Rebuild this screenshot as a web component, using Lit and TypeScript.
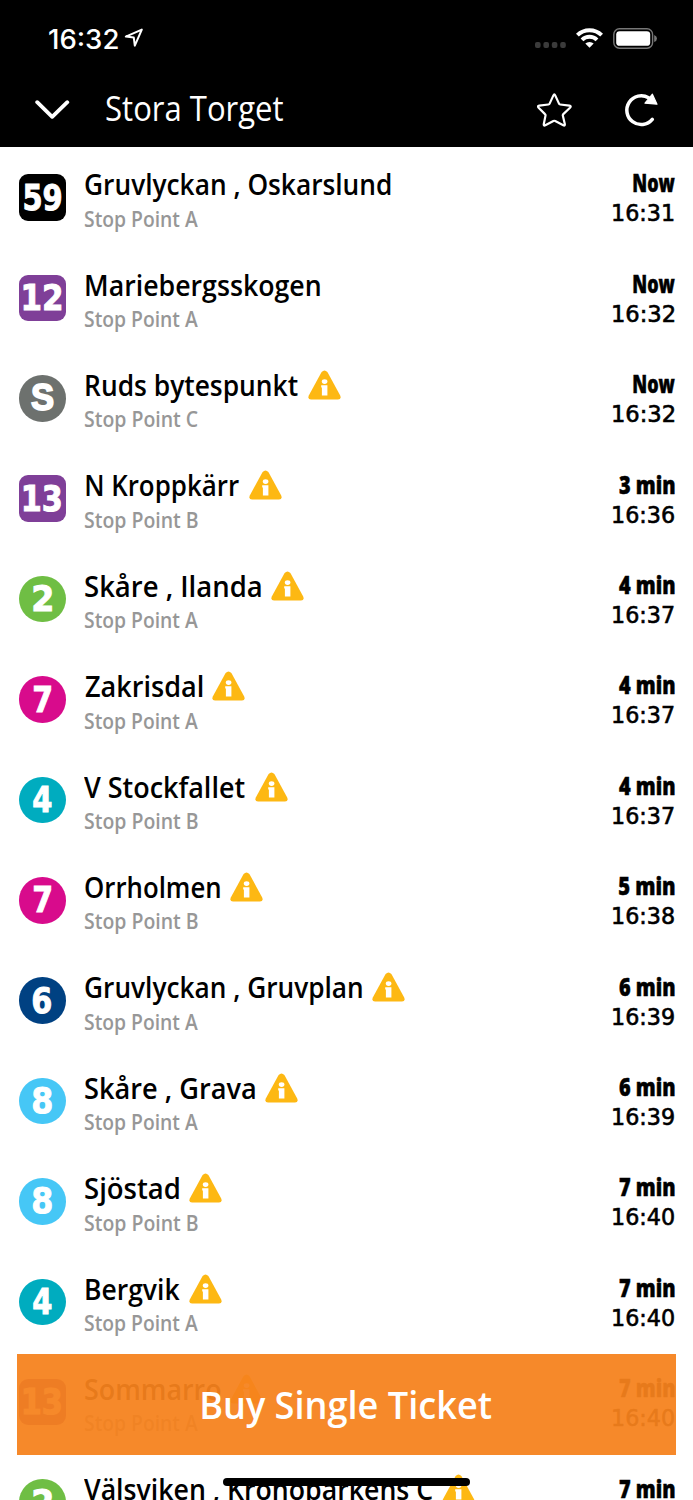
import { LitElement, html, css, svg } from "lit";
import { customElement, property } from "lit/decorators.js";

const measure = document.createElement("canvas").getContext("2d")!;

/** One line of text condensed or widened to an exact visible width. */
@customElement("fit-text")
class FitText extends LitElement {
  @property() text = "";
  @property({ type: Number }) w = 100;

  static styles = css`
    :host { display: block; white-space: pre; flex: none; }
    .line { display: inline-block; transform-origin: 0 50%; }
  `;

  render() {
    const cs = getComputedStyle(this);
    measure.font = `${cs.fontWeight} ${cs.fontSize} ${cs.fontFamily}`;
    const m = measure.measureText(this.text);
    const scale = this.w / (m.actualBoundingBoxLeft + m.actualBoundingBoxRight);
    const shift = m.actualBoundingBoxLeft * scale;
    this.style.width = `${this.w}px`;
    return html`<span class="line" style="transform: translateX(${shift}px) scaleX(${scale})">${this.text}</span>`;
  }
}

type Row = {
  line: string; color: string; square?: boolean;
  name: string; left: number; right: number;
  stop: string; alert?: boolean; due: string; time: string;
};

const rows: Row[] = [
  { line: "59", color: "#000000", square: true, name: "Gruvlyckan , Oskarslund", left: 85, right: 391, stop: "A", due: "Now", time: "16:31" },
  { line: "12", color: "#7f3f98", square: true, name: "Mariebergsskogen", left: 86, right: 320, stop: "A", due: "Now", time: "16:32" },
  { line: "S", color: "#6d716e", name: "Ruds bytespunkt", left: 86, right: 298, stop: "C", alert: true, due: "Now", time: "16:32" },
  { line: "13", color: "#7f3f98", square: true, name: "N Kroppkärr", left: 86, right: 239, stop: "B", alert: true, due: "3 min", time: "16:36" },
  { line: "2", color: "#6fbe44", name: "Skåre , Ilanda", left: 84.5, right: 261, stop: "A", alert: true, due: "4 min", time: "16:37" },
  { line: "7", color: "#d80b8c", name: "Zakrisdal", left: 84.5, right: 202, stop: "A", alert: true, due: "4 min", time: "16:37" },
  { line: "4", color: "#00acbf", name: "V Stockfallet", left: 84, right: 245, stop: "B", alert: true, due: "4 min", time: "16:37" },
  { line: "7", color: "#d80b8c", name: "Orrholmen", left: 85, right: 220, stop: "B", alert: true, due: "5 min", time: "16:38" },
  { line: "6", color: "#004182", name: "Gruvlyckan , Gruvplan", left: 85, right: 362, stop: "A", alert: true, due: "6 min", time: "16:39" },
  { line: "8", color: "#46c7f6", name: "Skåre , Grava", left: 84.5, right: 255, stop: "A", alert: true, due: "6 min", time: "16:39" },
  { line: "8", color: "#46c7f6", name: "Sjöstad", left: 84.5, right: 179, stop: "B", alert: true, due: "7 min", time: "16:40" },
  { line: "4", color: "#00acbf", name: "Bergvik", left: 86, right: 179.5, stop: "A", alert: true, due: "7 min", time: "16:40" },
  { line: "13", color: "#7f3f98", square: true, name: "Sommarro", left: 84.5, right: 220, stop: "A", alert: true, due: "7 min", time: "16:40" },
  { line: "2", color: "#6fbe44", name: "Välsviken , Kronoparkens C", left: 84, right: 432.5, stop: "B", alert: true, due: "7 min", time: "16:41" },
];

const badgeWidth = (line: string) =>
  line.length === 2 ? 37 : line === "S" ? 21.5 : line === "7" ? 17.5 : 18.5;

const alertIcon = html`<svg class="alert" width="33" height="30" viewBox="0 0 33 30">
  ${svg`<path d="M13.6 1.9Q16.5-1.1 19.4 1.9L32.2 25.6Q33.6 29.5 30 29.5H3Q-.6 29.5 .8 25.6Z" fill="#fdb813"/>
  <ellipse cx="16.6" cy="11.6" rx="2.8" ry="2.3" fill="#fff"/>
  <path d="M13.2 15.3H19.4V25.4H13.9V17.4H13.2Z" fill="#fff"/>`}
</svg>`;

@customElement("app-root")
class AppRoot extends LitElement {
  static styles = css`
    :host {
      display: block; position: relative; width: 693px; height: 1500px; overflow: hidden;
      background: #fff; color: #000; font-family: "Open Sans", "Noto Sans", sans-serif;
    }
    header { height: 147.3px; background: #000; color: #fff; box-sizing: border-box; }
    .status { display: flex; align-items: center; height: 76px; padding: 0 36px 0 49px; box-sizing: border-box; }
    .clock { font: 500 26.5px/32px Inter, sans-serif; margin-right: 6px; margin-top: 1px; }
    .dots { margin-left: auto; margin-top: 13px; }
    .wifi { margin-left: 9px; }
    .battery { margin-left: 10px; }
    .nav { display: flex; align-items: center; height: 68px; padding: 0 35px 0 35px; }
    .title { font-size: 34px; line-height: 44px; font-weight: 400; margin-left: 36px; margin-top: -5px; }
    .down { margin-top: -1px; }
    .star { margin-left: auto; margin-right: 52px; }
    .row { display: flex; height: 100.4px; padding: 0 18px 0 19px; box-sizing: border-box; }
    .badge {
      width: 46.5px; height: 46.5px; margin-top: 27px; flex: none; border-radius: 50%; color: #fff;
      display: flex; align-items: center; justify-content: center;
      font: 700 36px/46px "DejaVu Sans", sans-serif; -webkit-text-stroke: 1px #fff;
    }
    .badge.square { border-radius: 9px; }
    .badge.letter { font-family: "Liberation Sans", sans-serif; font-size: 37px; -webkit-text-stroke: 1.8px #fff; }
    .info { flex: 1; margin-top: 20px; }
    .head { display: flex; height: 34px; }
    .name { font-size: 28px; line-height: 34px; font-weight: 600; }
    .alert { margin: 2px 0 0 9.5px; flex: none; }
    .stop { font-size: 20.8px; line-height: 26px; font-weight: 600; color: #979797; margin: 4.3px 0 0 19px; }
    .when { display: flex; flex-direction: column; align-items: flex-end; gap: 3px; margin-top: 21.2px; }
    .due { font-size: 25px; line-height: 28px; font-weight: 800; -webkit-text-stroke: 0.5px currentColor; }
    .time { font: 400 22.2px/28px "DejaVu Sans", sans-serif; -webkit-text-stroke: 0.6px #000; margin-right: 0.7px; }
    .buy {
      position: absolute; left: 17px; top: 1354px; width: 659px; height: 100.5px;
      display: flex; align-items: center; justify-content: center;
      background: rgba(245, 130, 29, 0.94); color: #fff;
      font-size: 38px; line-height: 50px; font-weight: 600;
    }
    .home { position: absolute; left: 223px; top: 1478px; width: 247px; height: 8px; border-radius: 4px; background: #000; }
  `;

  renderRow(r: Row) {
    return html`<div class="row">
      <div class="badge ${r.square ? "square" : ""} ${r.line === "S" ? "letter" : ""}" style="background:${r.color}">
        <fit-text text=${r.line} w=${badgeWidth(r.line)}></fit-text>
      </div>
      <div class="info">
        <div class="head">
          <fit-text class="name" style="margin-left:${r.left - 65.5}px" text=${r.name} w=${r.right - r.left}></fit-text>
          ${r.alert ? alertIcon : ""}
        </div>
        <fit-text class="stop" text="Stop Point ${r.stop}" w="113"></fit-text>
      </div>
      <div class="when">
        <fit-text class="due" text=${r.due} w=${r.due === "Now" ? 42 : 56}></fit-text>
        <fit-text class="time" text=${r.time} w="61"></fit-text>
      </div>
    </div>`;
  }

  render() {
    return html`
      <header>
        <div class="status">
          <fit-text class="clock" text="16:32" w="69"></fit-text>
          <svg width="20" height="20" viewBox="0 0 20 20" fill="none" stroke="#fff" stroke-width="2" stroke-linejoin="round">
            <path d="M1.8 8.6 17.8 1.6 10.8 17.6 9.8 9.6Z"/>
          </svg>
          <svg class="dots" width="32" height="6" viewBox="0 0 32 6" fill="#3b3b3b">
            <rect x="0" width="5.6" height="6" rx="2"/><rect x="8.4" width="5.6" height="6" rx="2"/>
            <rect x="16.8" width="5.6" height="6" rx="2"/><rect x="25.2" width="5.6" height="6" rx="2"/>
          </svg>
          <svg class="wifi" width="27" height="20" viewBox="0 0 27 20" fill="none" stroke="#fff" stroke-width="4">
            <path d="M1.4 7.2A17.2 17.2 0 0 1 25.6 7.2"/>
            <path d="M6 11.9A10.8 10.8 0 0 1 21 11.9"/>
            <path d="M13.5 19.8 9.3 15.6A6 6 0 0 1 17.7 15.6Z" fill="#fff" stroke="none"/>
          </svg>
          <svg class="battery" width="44" height="21" viewBox="0 0 44 21">
            <rect x=".8" y=".8" width="38.8" height="19.4" rx="5.6" fill="none" stroke="#777" stroke-width="1.4"/>
            <rect x="3.2" y="3.2" width="34" height="14.6" rx="3.4" fill="#fff"/>
            <path d="M41.2 7Q44 8.2 44 10.5T41.2 14Z" fill="#777"/>
          </svg>
        </div>
        <div class="nav">
          <svg class="down" width="35" height="20" viewBox="0 0 35 20" fill="none" stroke="#fff" stroke-width="3.8" stroke-linecap="round" stroke-linejoin="round">
            <path d="M2.2 2.2 17.2 16.8 32.3 2.2"/>
          </svg>
          <fit-text class="title" text="Stora Torget" w="177.5"></fit-text>
          <svg class="star" width="35" height="34" viewBox="0 0 35 34" fill="none" stroke="#fff" stroke-width="2.2" stroke-linejoin="round">
            <path d="M16.4 2.4Q17.3.4 18.2 2.4L22 10.6Q22.3 11.4 23.2 11.5L32.4 12.7Q34.6 13.1 33 14.7L26.3 21.1Q25.7 21.7 25.8 22.6L27.8 31Q28.1 33.2 26.3 32.3L18.2 28Q17.3 27.5 16.4 28L8.3 32.3Q6.5 33.2 6.8 31L8.5 22.6Q8.7 21.7 8 21.1L1.6 14.7Q0 13.1 2.2 12.7L11.4 11.5Q12.3 11.4 12.6 10.6Z"/>
          </svg>
          <svg width="34" height="34" viewBox="0 0 34 34" fill="none" stroke="#fff" stroke-width="3.5" stroke-linecap="round">
            <path d="M28.3 26.4A14.4 14.4 0 1 1 24.6 4.8"/>
            <path d="M28.4 1.2 33 11.2 21 10.2Z" fill="#fff" stroke-width="1.2" stroke-linejoin="round"/>
          </svg>
        </div>
      </header>
      <main>${rows.map((r) => this.renderRow(r))}</main>
      <div class="buy"><fit-text text="Buy Single Ticket" w="289"></fit-text></div>
      <div class="home"></div>
    `;
  }
}
